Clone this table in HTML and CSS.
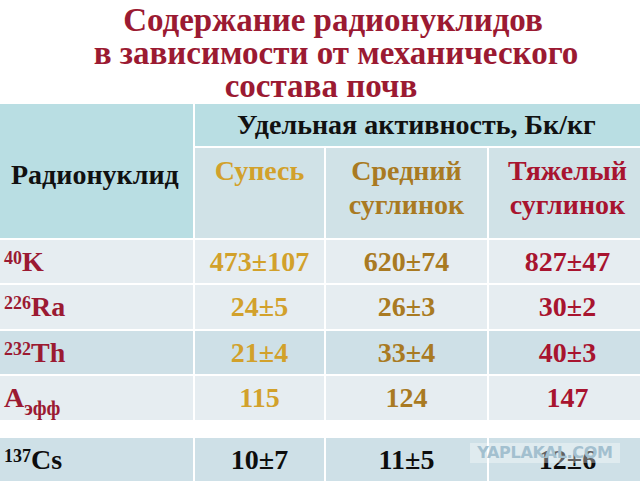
FILE: index.html
```html
<!DOCTYPE html>
<html lang="ru">
<head>
<meta charset="utf-8">
<link rel="stylesheet" href="styles.css">
</head>
<body>
<div class="slide">
  <h1 class="title">
    <span class="tl l1">Содержание радионуклидов</span>
    <span class="tl l2">в зависимости от механического</span>
    <span class="tl l3">состава почв</span>
  </h1>
  <div class="grid">
    <div class="cell head nuc-head">Радионуклид</div>
    <div class="cell head act-head">Удельная активность, Бк/кг</div>
    <div class="cell sub gold">Супесь</div>
    <div class="cell sub brown">Средний<br>суглинок</div>
    <div class="cell sub crimson">Тяжелый<br>суглинок</div>

    <div class="cell nuc light"><sup>40</sup>K</div>
    <div class="cell val light gold">473±107</div>
    <div class="cell val light brown">620±74</div>
    <div class="cell val light crimson">827±47</div>

    <div class="cell nuc light"><sup>226</sup>Ra</div>
    <div class="cell val light gold">24±5</div>
    <div class="cell val light brown">26±3</div>
    <div class="cell val light crimson">30±2</div>

    <div class="cell nuc dark"><sup>232</sup>Th</div>
    <div class="cell val dark gold">21±4</div>
    <div class="cell val dark brown">33±4</div>
    <div class="cell val dark crimson">40±3</div>

    <div class="cell nuc light">A<sub>эфф</sub></div>
    <div class="cell val light gold">115</div>
    <div class="cell val light brown">124</div>
    <div class="cell val light crimson">147</div>

    <div class="spacer"></div>

    <div class="cell nuc dark black"><sup>137</sup>Cs</div>
    <div class="cell val dark black">10±7</div>
    <div class="cell val dark black">11±5</div>
    <div class="cell val dark black">12±6</div>
  </div>
  <div class="watermark">YAPLAKAL.COM</div>
</div>
</body>
</html>
```

FILE: styles.css
```css
html, body {
  margin: 0;
  padding: 0;
  background: #ffffff;
}
.slide {
  position: relative;
  width: 640px;
  height: 481px;
  overflow: hidden;
  font-family: "Liberation Serif", "Times New Roman", serif;
  font-weight: bold;
}
.title {
  margin: 0;
  height: 104px;
  padding-top: 4px;
  box-sizing: border-box;
  display: flex;
  flex-direction: column;
  align-items: center;
  color: #9b1a32;
  font-size: 33px;
  line-height: 33px;
  font-weight: bold;
}
.tl { display: block; white-space: nowrap; }
.l1 { margin-left: 26px; }
.l2 { margin-left: 32px; }
.l3 { margin-left: 2px; }
.grid {
  display: grid;
  grid-template-columns: 193px 129px 161px 157px;
  grid-template-rows: 42px 90px 43px 44px 43px 44px 14px 44px;
  gap: 2px;
  background: #ffffff;
  width: 646px;
}
.cell {
  box-sizing: border-box;
  font-size: 28px;
  line-height: 30px;
}
.head {
  background: #b9dee3;
  color: #111111;
}
.nuc-head {
  grid-row: 1 / span 2;
  display: flex;
  align-items: center;
  padding-left: 11px;
  padding-top: 8px;
  font-size: 28px;
}
.act-head {
  grid-column: 2 / span 3;
  display: flex;
  align-items: center;
  padding-left: 42px;
  font-size: 28px;
}
.sub {
  background: #d0e2e7;
  text-align: center;
  padding-top: 6px;
  line-height: 34px;
}
.nuc {
  display: flex;
  align-items: center;
  padding-left: 4px;
  color: #9b1a32;
}
.val {
  display: flex;
  align-items: center;
  justify-content: center;
}
.light { background: #e6edf1; }
.dark { background: #cee0e7; }
.gold { color: #d2a12b; }
.brown { color: #a97a22; }
.crimson { color: #a8142f; }
.black { color: #0d0d0d; }
.nuc sup {
  font-size: 18px;
  position: relative;
  top: -4px;
  vertical-align: top;
  line-height: 20px;
}
.nuc sub {
  font-size: 20px;
  position: relative;
  top: 10px;
  vertical-align: baseline;
  line-height: 10px;
}
.spacer {
  grid-column: 1 / span 4;
  background: #ffffff;
}
.watermark {
  position: absolute;
  left: 470px;
  top: 443px;
  width: 150px;
  height: 20px;
  background: rgba(255, 255, 255, 0.35);
  color: #a3c0cf;
  font-family: "DejaVu Sans", sans-serif;
  font-weight: bold;
  font-size: 16px;
  line-height: 20px;
  text-align: center;
  letter-spacing: -0.3px;
}
```
